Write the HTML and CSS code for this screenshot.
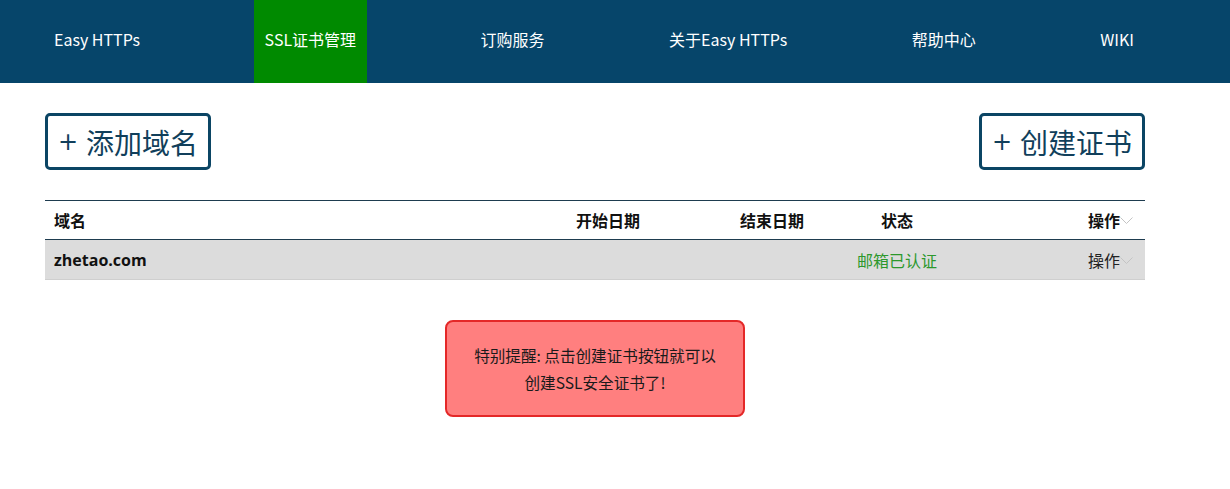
FILE: index.html
```html
<!DOCTYPE html>
<html lang="zh-CN">
<head>
    <meta charset="UTF-8">
    <meta name="viewport" content="width=device-width, initial-scale=1.0">
    <title>SSL证书管理 - Easy HTTPs</title>
    <link rel="stylesheet" href="styles.css">
</head>
<body>

<div class="navbar">
    <ul class="nav">
        <li><a href="#">Easy HTTPs</a></li>
        <li class="active"><a href="#">SSL证书管理</a></li>
        <li><a href="#">订购服务</a></li>
        <li><a href="#">关于Easy HTTPs</a></li>
        <li><a href="#">帮助中心</a></li>
        <li><a href="#">WIKI</a></li>
    </ul>
</div>

<div class="container">
    <div class="toolbar">
        <button class="big-btn"><span class="plus">+</span>添加域名</button>
        <button class="big-btn"><span class="plus">+</span>创建证书</button>
    </div>

    <div class="domain-table">
        <div class="row head">
            <div class="col-name">域名</div>
            <div class="col-center">开始日期</div>
            <div class="col-center">结束日期</div>
            <div class="col-center">状态</div>
            <div class="col-ops">操作<span class="chevron"><svg width="13" height="8" viewBox="0 0 13 8"><path d="M0.5 0.5 L6.5 6.5 L12.5 0.5" fill="none" stroke="#c4c4c4" stroke-width="1"/></svg></span></div>
        </div>
        <div class="row item">
            <div class="col-name domain">zhetao.com</div>
            <div class="col-center"></div>
            <div class="col-center"></div>
            <div class="col-center status-ok">邮箱已认证</div>
            <div class="col-ops">操作<span class="chevron"><svg width="13" height="8" viewBox="0 0 13 8"><path d="M0.5 0.5 L6.5 6.5 L12.5 0.5" fill="none" stroke="#c4c4c4" stroke-width="1"/></svg></span></div>
        </div>
    </div>

    <div class="notice">
        特别提醒: 点击创建证书按钮就可以<br>创建SSL安全证书了!
    </div>
</div>

</body>
</html>
```

FILE: styles.css
```css
body {
    font-family: "Noto Sans CJK SC", "Noto Sans", sans-serif;
    background-color: #fff;
    color: #111;
    margin: 0;
}
.navbar {
    background-color: #06456a;
    height: 83px;
}
.nav {
    list-style: none;
    margin: 0 0 0 43px;
    padding: 0;
    width: 1102px;
    height: 83px;
    display: flex;
    justify-content: space-between;
}
.nav li {
    display: flex;
    align-items: center;
    padding: 0 11px;
}
.nav li.active {
    background-color: #008a00;
}
.nav a {
    color: #fff;
    text-decoration: none;
    font-size: 16px;
    padding-bottom: 5px;
}
.container {
    width: 1100px;
    margin-left: 45px;
}
.toolbar {
    display: flex;
    justify-content: space-between;
    padding-top: 30px;
}
.big-btn {
    height: 57px;
    padding: 0 10px;
    background-color: #fff;
    border: 3px solid #0b4564;
    border-radius: 5px;
    color: #113f5b;
    font-family: inherit;
    font-size: 28px;
    line-height: 1;
    cursor: pointer;
    display: flex;
    align-items: center;
}
.big-btn .plus {
    font-family: "DejaVu Sans", sans-serif;
    font-size: 24px;
    margin-right: 8px;
}
.domain-table {
    margin-top: 30px;
    border-top: 1px solid #1e3c4f;
}
.row {
    display: grid;
    grid-template-columns: 463px 200px 128px 122px 187px;
    align-items: center;
    font-size: 16px;
}
.row.head {
    height: 38px;
    font-weight: bold;
    border-bottom: 1px solid #1e3c4f;
}
.row.item {
    height: 39px;
    background-color: #dcdcdc;
    border-bottom: 1px solid #cfcfcf;
}
.col-name {
    padding-left: 9px;
}
.domain {
    font-weight: bold;
    font-family: "Open Sans", "Noto Sans CJK SC", sans-serif;
    font-size: 16px;
}
.col-center {
    text-align: center;
}
.col-ops {
    display: flex;
    justify-content: flex-end;
    align-items: center;
    padding-right: 12px;
}
.chevron {
    display: inline-flex;
    margin-top: 2px;
}
.status-ok {
    color: #2c982c;
}
.row.item .col-ops {
    color: #222;
}
.notice {
    width: 296px;
    height: 93px;
    margin: 40px 0 0 400px;
    background-color: #ff7f7f;
    border: 2px solid #e42828;
    border-radius: 8px;
    display: flex;
    align-items: center;
    justify-content: center;
    text-align: center;
    font-size: 15.6px;
    line-height: 27px;
    color: #1a1a1a;
}
```
